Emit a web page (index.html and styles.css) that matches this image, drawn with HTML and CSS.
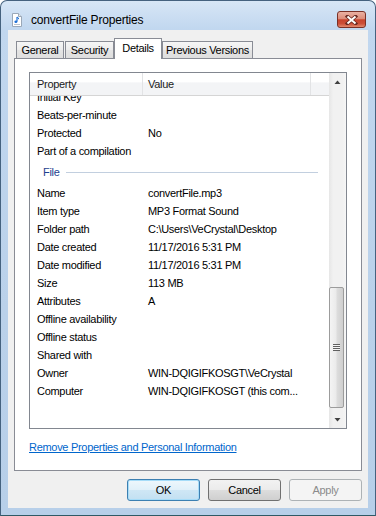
FILE: index.html
```html
<!DOCTYPE html>
<html lang="en">
<head>
  <meta charset="UTF-8" />
  <title>convertFile Properties</title>
  <link rel="stylesheet" href="styles.css">
</head>
<body>
  <div class="window">
    <div class="titlebar">
      <svg class="app-icon" width="10" height="14" viewBox="0 0 10 14">
        <path d="M0.5 0.5 H6.5 L9.5 3.5 V13.5 H0.5 Z" fill="#fff" stroke="#9aa8b8"/>
        <path d="M6.5 0.5 V3.5 H9.5" fill="#e4e9ef" stroke="#9aa8b8"/>
        <path d="M5 4 V8.6" stroke="#1c6fd6" stroke-width="1.2"/>
        <path d="M5 4 Q6.8 4.6 6.6 6.2" fill="none" stroke="#1c6fd6" stroke-width="1"/>
        <ellipse cx="3.9" cy="8.8" rx="1.5" ry="1.2" fill="#1c6fd6"/>
        <path d="M2 11.5 H8" stroke="#b9c3cf"/>
      </svg>
      <span class="title">convertFile Properties</span>
      <button class="close">
        <svg width="13" height="10" viewBox="0 0 13 10">
          <path d="M2.5 1.5 L10.5 8.5 M10.5 1.5 L2.5 8.5" stroke="#6a2a22" stroke-width="3.6" stroke-linecap="square"/>
          <path d="M2.5 1.5 L10.5 8.5 M10.5 1.5 L2.5 8.5" stroke="#fff" stroke-width="2"/>
        </svg>
      </button>
    </div>

    <div class="client">
      <div class="tabs">
        <div class="tab tab-general">General</div>
        <div class="tab tab-security">Security</div>
        <div class="tab tab-details active">Details</div>
        <div class="tab tab-versions">Previous Versions</div>
      </div>

      <div class="panel">
        <div class="list">
          <div class="list-main">
            <div class="list-head">
              <div class="col col-prop">Property</div>
              <div class="col col-val">Value</div>
              <div class="col col-rest"></div>
            </div>
            <div class="list-body">
              <div class="rows">
                <div class="row"><span class="k">Initial Key</span><span class="v"></span></div>
                <div class="row"><span class="k">Beats-per-minute</span><span class="v"></span></div>
                <div class="row"><span class="k">Protected</span><span class="v">No</span></div>
                <div class="row"><span class="k">Part of a compilation</span><span class="v"></span></div>
                <div class="group">File</div>
                <div class="row"><span class="k">Name</span><span class="v">convertFile.mp3</span></div>
                <div class="row"><span class="k">Item type</span><span class="v">MP3 Format Sound</span></div>
                <div class="row"><span class="k">Folder path</span><span class="v">C:\Users\VeCrystal\Desktop</span></div>
                <div class="row"><span class="k">Date created</span><span class="v">11/17/2016 5:31 PM</span></div>
                <div class="row"><span class="k">Date modified</span><span class="v">11/17/2016 5:31 PM</span></div>
                <div class="row"><span class="k">Size</span><span class="v">113 MB</span></div>
                <div class="row"><span class="k">Attributes</span><span class="v">A</span></div>
                <div class="row"><span class="k">Offline availability</span><span class="v"></span></div>
                <div class="row"><span class="k">Offline status</span><span class="v"></span></div>
                <div class="row"><span class="k">Shared with</span><span class="v"></span></div>
                <div class="row"><span class="k">Owner</span><span class="v">WIN-DQIGIFKOSGT\VeCrystal</span></div>
                <div class="row"><span class="k">Computer</span><span class="v">WIN-DQIGIFKOSGT (this com...</span></div>
              </div>
            </div>
          </div>
          <div class="vscroll">
            <div class="sb-btn">
              <svg width="7" height="4" viewBox="0 0 7 4"><path d="M0.5 4 L3.5 0.5 L6.5 4 Z" fill="#404040"/></svg>
            </div>
            <div class="track">
              <div class="thumb"><span class="grip"></span></div>
            </div>
            <div class="sb-btn">
              <svg width="7" height="4" viewBox="0 0 7 4"><path d="M0.5 0 L3.5 3.5 L6.5 0 Z" fill="#404040"/></svg>
            </div>
          </div>
        </div>
        <a class="link" href="#">Remove Properties and Personal Information</a>
      </div>

      <div class="buttons">
        <button class="btn default">OK</button>
        <button class="btn">Cancel</button>
        <button class="btn" disabled>Apply</button>
      </div>
    </div>
  </div>
</body>
</html>
```

FILE: styles.css
```css
* { margin: 0; padding: 0; box-sizing: border-box; }
body { font-family: "Liberation Sans", Arial, sans-serif; font-size: 11px; letter-spacing: -0.3px; color: #000; background: #fff; }

/* window frame */
.window { width: 376px; height: 516px; display: flex; flex-direction: column; padding: 0 7px 7px; border: 1px solid #45627f; border-bottom-color: #2f5965; border-radius: 7px 7px 0 0; background: linear-gradient(#d7e6f6, #c1d7ef 28px, #bad1ea 60%, #b7cfe9); }
.titlebar { height: 29px; display: flex; align-items: center; padding: 8px 2px 0 4px; }
.app-icon { margin-right: 9px; }
.title { font-size: 12px; letter-spacing: -0.2px; color: #000; }
.close { margin-left: auto; width: 29px; height: 17px; display: flex; align-items: center; justify-content: center; border: 1px solid #7a3026; border-radius: 3px; background: linear-gradient(#eab1a3, #dc8d7b 45%, #c8432d 52%, #cc4f38 78%, #e38b70); }

/* client area */
.client { flex: 1; display: flex; flex-direction: column; padding: 8px 6px 7px; background: #f0f0f0; }
.tabs { height: 20px; display: flex; align-items: flex-end; padding-left: 2px; }
.tab { height: 17px; line-height: 16px; text-align: center; border: 1px solid #898c95; border-bottom: 0; background: linear-gradient(#f6f6f6, #ececec 50%, #e4e4e4 51%, #dedede); }
.tab-general { width: 48px; margin-right: 1px; }
.tab-security { width: 49px; }
.tab-details { width: 48px; }
.tab-versions { width: 91px; }
.tab.active { height: 21px; margin-bottom: -1px; padding-top: 1px; background: #fff; position: relative; z-index: 1; }

.panel { height: 413px; padding: 13px 14px 0; border: 1px solid #898c95; background: #fff; }

/* details list */
.list { height: 357px; display: flex; border: 1px solid #828790; background: #fff; }
.list-main { flex: 1; min-width: 0; display: flex; flex-direction: column; }
.list-head { height: 23px; display: flex; border-bottom: 1px solid #d5d5d5; background: linear-gradient(#fff, #fff 40%, #f3f4f6 45%, #f3f4f6); color: #1b1b1b; }
.col { line-height: 22px; }
.col-prop { width: 113px; padding-left: 7px; border-right: 1px solid #e2e3e5; }
.col-val { width: 168px; padding-left: 5px; border-right: 1px solid #e2e3e5; }
.col-rest { flex: 1; }
.list-body { flex: 1; overflow: hidden; }
.rows { margin-top: -8px; }
.row { height: 18px; line-height: 18px; display: flex; white-space: nowrap; }
.row .k { width: 112px; padding-left: 7px; }
.row .v { padding-left: 6px; }
.group { height: 24px; display: flex; align-items: center; padding-left: 13px; color: #1e3f8f; }
.group::after { content: ""; flex: 1; height: 1px; margin: 0 11px 0 6px; background: #c2cfdf; }

.vscroll { width: 17px; display: flex; flex-direction: column; background: linear-gradient(to right, #e6e6e6, #f1f1f1 25%, #f1f1f1 80%, #f6f6f6); }
.sb-btn { height: 17px; display: flex; align-items: center; justify-content: center; }
.track { flex: 1; }
.thumb { width: 15px; height: 121px; margin-top: 197px; display: flex; align-items: center; justify-content: center; border: 1px solid #9c9c9c; border-radius: 2px; background: linear-gradient(to right, #f4f4f4, #ebebeb 45%, #dcdcdc 55%, #cfcfcf); }
.grip { width: 7px; height: 7px; background: repeating-linear-gradient(#606060 0 1px, #f4f4f4 1px 2px); }

.link { display: inline-block; margin-top: 11px; line-height: 14px; color: #0066cc; text-decoration: underline; }

/* dialog buttons */
.buttons { display: flex; justify-content: flex-end; gap: 8px; margin-top: 8px; }
.btn { width: 73px; height: 22px; font-family: inherit; font-size: 11px; letter-spacing: -0.3px; color: #000; border: 1px solid #707070; border-radius: 3px; background: linear-gradient(#f2f2f2, #ebebeb 50%, #dddddd 51%, #cfcfcf); }
.btn.default { border-color: #3c7fb1; box-shadow: inset 0 0 0 1px #a6dcf8; background: linear-gradient(#eef7fc, #e0f0f9 50%, #cfe7f5 51%, #c2e0f2); }
.btn:disabled { color: #8b8b8b; border-color: #adb2b5; background: #f4f4f4; }
```
